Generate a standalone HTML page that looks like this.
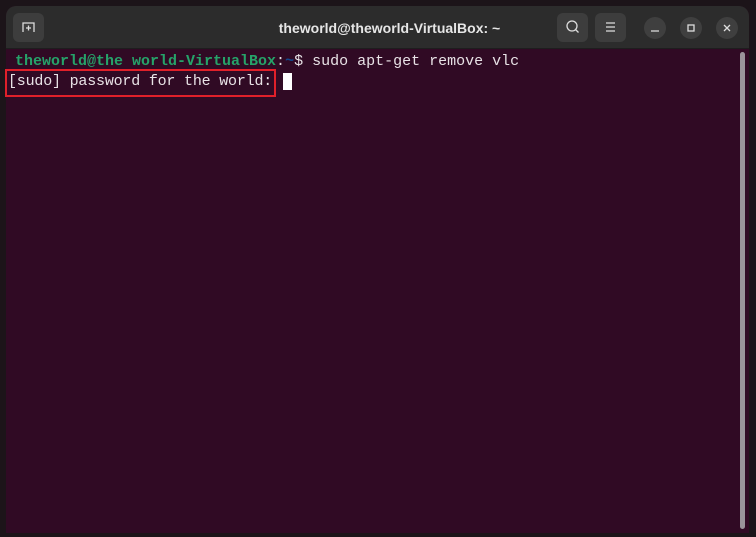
<!DOCTYPE html>
<html><head><style>
body{margin:0;width:756px;height:537px;background:#1c1419;overflow:hidden;position:relative;font-family:"Liberation Sans",sans-serif}
.win{position:absolute;left:6px;top:6px;width:743px;height:527px;background:#300a24;border-radius:10px 10px 0 0;overflow:hidden}
.hdr{position:absolute;left:0;top:0;width:100%;height:42px;background:#2c2c2c;border-bottom:1px solid #1e1e1e}
.title{position:absolute;left:12px;width:100%;top:14px;text-align:center;color:#e6e6e6;font-weight:bold;font-size:14px}
.btn{position:absolute;top:7px;width:31px;height:29px;background:#3d3d3d;border-radius:6px}
.circ{position:absolute;top:11px;width:22px;height:22px;border-radius:50%;background:#3f3f3f}
.term{position:absolute;left:2px;top:51px;font-family:"Liberation Mono",monospace;font-size:15px;line-height:21px;color:#e8e2e6;white-space:pre}
.g{color:#26a269;font-weight:bold}.b{color:#12488b;font-weight:bold}
.red{position:absolute;left:5px;top:69px;width:267px;height:24px;border:2px solid #e0202a}
.cur{position:absolute;left:283px;top:73px;width:9px;height:17px;background:#fff}
.sb{position:absolute;left:740px;top:52px;width:5px;height:477px;background:#9a939a;border-radius:3px}
</style></head><body>
<div class="win">
 <div class="hdr">
  <div class="btn" style="left:7px"><svg width="31" height="29"><path d="M10 19V10h11v9" fill="none" stroke="#ddd" stroke-width="1.3"/><path d="M15.5 12.5v5M13 15h5" stroke="#ddd" stroke-width="1.3"/></svg></div>
  <div class="title">theworld@theworld-VirtualBox: ~</div>
  <div class="btn" style="left:551px"><svg width="31" height="29"><circle cx="15" cy="13" r="5" fill="none" stroke="#ddd" stroke-width="1.3"/><path d="M18.5 16.5l3 3" stroke="#ddd" stroke-width="1.3"/></svg></div>
  <div class="btn" style="left:589px"><svg width="31" height="29"><path d="M11 10h9M11 14h9M11 18h9" stroke="#ddd" stroke-width="1.2"/></svg></div>
  <div class="circ" style="left:638px"><svg width="22" height="22"><path d="M7 14h8" stroke="#ddd" stroke-width="1.3"/></svg></div>
  <div class="circ" style="left:674px"><svg width="22" height="22"><rect x="8" y="8" width="6" height="6" fill="none" stroke="#ddd" stroke-width="1.3"/></svg></div>
  <div class="circ" style="left:710px"><svg width="22" height="22"><path d="M8 8l6 6M14 8l-6 6" stroke="#ddd" stroke-width="1.3"/></svg></div>
 </div>
</div>
<div class="term" style="left:15px"><span class="g">theworld@the world-VirtualBox</span>:<span class="b">~</span>$ sudo apt-get remove vlc</div>
<div class="term" style="left:8px;top:71px;letter-spacing:-0.2px">[sudo] password for the world:</div>
<div class="red"></div>
<div class="cur"></div>
<div class="sb"></div>
</body></html>
